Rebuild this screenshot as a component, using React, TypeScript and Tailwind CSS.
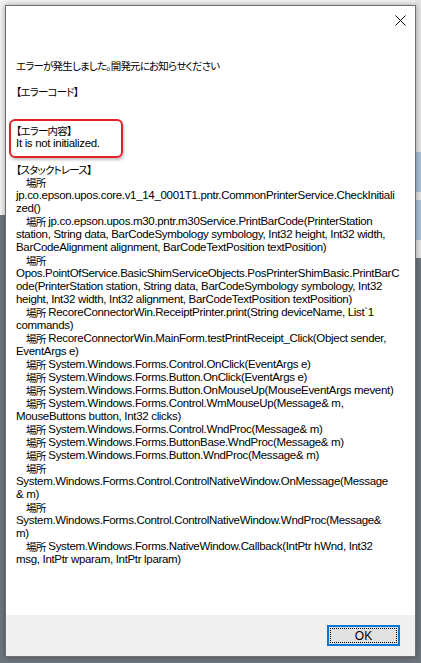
const trace: [boolean, string][] = [
  [true, ""],
  [false, "jp.co.epson.upos.core.v1_14_0001T1.pntr.CommonPrinterService.CheckInitiali"],
  [false, "zed()"],
  [true, "jp.co.epson.upos.m30.pntr.m30Service.PrintBarCode(PrinterStation"],
  [false, "station, String data, BarCodeSymbology symbology, Int32 height, Int32 width,"],
  [false, "BarCodeAlignment alignment, BarCodeTextPosition textPosition)"],
  [true, ""],
  [false, "Opos.PointOfService.BasicShimServiceObjects.PosPrinterShimBasic.PrintBarC"],
  [false, "ode(PrinterStation station, String data, BarCodeSymbology symbology, Int32"],
  [false, "height, Int32 width, Int32 alignment, BarCodeTextPosition textPosition)"],
  [true, "RecoreConnectorWin.ReceiptPrinter.print(String deviceName, List`1"],
  [false, "commands)"],
  [true, "RecoreConnectorWin.MainForm.testPrintReceipt_Click(Object sender,"],
  [false, "EventArgs e)"],
  [true, "System.Windows.Forms.Control.OnClick(EventArgs e)"],
  [true, "System.Windows.Forms.Button.OnClick(EventArgs e)"],
  [true, "System.Windows.Forms.Button.OnMouseUp(MouseEventArgs mevent)"],
  [true, "System.Windows.Forms.Control.WmMouseUp(Message& m,"],
  [false, "MouseButtons button, Int32 clicks)"],
  [true, "System.Windows.Forms.Control.WndProc(Message& m)"],
  [true, "System.Windows.Forms.ButtonBase.WndProc(Message& m)"],
  [true, "System.Windows.Forms.Button.WndProc(Message& m)"],
  [true, ""],
  [false, "System.Windows.Forms.Control.ControlNativeWindow.OnMessage(Message"],
  [false, "& m)"],
  [true, ""],
  [false, "System.Windows.Forms.Control.ControlNativeWindow.WndProc(Message&"],
  [false, "m)"],
  [true, "System.Windows.Forms.NativeWindow.Callback(IntPtr hWnd, Int32"],
  [false, "msg, IntPtr wparam, IntPtr lparam)"],
];

const Jp = ({ children }: { children: React.ReactNode }) => (
  <span className="inline-block h-[13px] leading-[13px] align-top font-['Noto_Sans_CJK_JP',sans-serif] text-[10.5px] tracking-[-0.8px] [font-feature-settings:'palt']">
    {children}
  </span>
);

const Line = ({ children, indent }: { children?: React.ReactNode; indent?: boolean }) => (
  <div className={`h-[13px] leading-[13px] whitespace-nowrap ${indent ? "pl-[10px]" : ""}`}>
    {children}
  </div>
);

export default function App() {
  return (
    <div className="relative w-[421px] h-[663px] overflow-hidden bg-[#6d767e] p-[5px] font-['Liberation_Sans','Noto_Sans_CJK_JP',sans-serif] text-[11.5px] tracking-[-0.32px] text-black">
      {/* desktop behind the dialog */}
      <div className="absolute left-0 top-0 w-full h-[215px] bg-[#f3f3f3]" />
      <div className="absolute right-0 top-0 w-[6px] h-[258px] bg-[#e4e4e4]">
        <div className="mt-[152px] h-[40px] bg-[#a9c1d8]" />
        <div className="mt-[8px] h-[40px] bg-[#a9c1d8]" />
      </div>

      <div className="relative flex flex-col h-[652px] w-[411px] border border-[#6f6f6f] bg-white shadow-[0_0_6px_rgba(0,0,0,0.35)]">
        <div className="flex justify-end pt-[9px] pr-[9px]">
          <svg width="11" height="11" viewBox="0 0 11 11" className="block">
            <path d="M0.5 0.5 L10.5 10.5 M10.5 0.5 L0.5 10.5" stroke="#000" strokeWidth="1" />
          </svg>
        </div>

        <div className="relative flex-1 pl-[10px] pt-[33px]">
          <div className="absolute left-[3px] top-[93px] w-[114px] h-[39px] rounded-[6px] border-2 border-[#e5202a] shadow-[1px_2px_3px_rgba(0,0,0,0.25)]" />
          <Line><Jp>エラーが発生しました。開発元にお知らせください</Jp></Line>
          <Line />
          <Line><Jp>【エラーコード】</Jp></Line>
          <Line />
          <Line />
          <Line><Jp>【エラー内容】</Jp></Line>
          <Line>It is not initialized.</Line>
          <Line />
          <Line><Jp>【スタックトレース】</Jp></Line>
          {trace.map(([indent, text], i) => (
            <Line key={i} indent={indent}>
              {indent && <Jp>場所</Jp>}
              {indent && text ? " " : ""}
              {text}
            </Line>
          ))}
        </div>

        <div className="flex justify-end h-[41px] bg-[#f0f0f0] pt-[10px] pr-[15px]">
          <button className="w-[73px] h-[21px] border-2 border-[#0078d7] bg-[#e1e1e1] p-[1px]">
            <div className="h-full w-full border border-dotted border-black flex items-center justify-center leading-none tracking-normal text-[12px]">
              OK
            </div>
          </button>
        </div>
      </div>
    </div>
  );
}
